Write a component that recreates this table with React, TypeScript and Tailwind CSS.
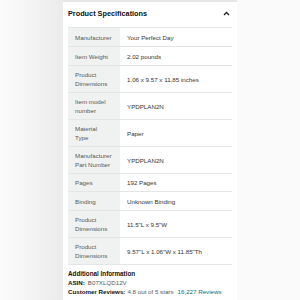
import { ReactNode } from "react";

const specs: { label: ReactNode; value: string; h: string }[] = [
  { label: "Manufacturer", value: "Your Perfect Day", h: "h-[19px]" },
  { label: "Item Weight", value: "2.02 pounds", h: "h-[19px]" },
  { label: <>Product<br />Dimensions</>, value: "1.06 x 9.57 x 11.85 inches", h: "h-[27px]" },
  { label: <>Item model<br />number</>, value: "YPDPLAN2N", h: "h-[27px]" },
  { label: <>Material<br />Type</>, value: "Paper", h: "h-[27px]" },
  { label: <>Manufacturer<br />Part Number</>, value: "YPDPLAN2N", h: "h-[27px]" },
  { label: "Pages", value: "192 Pages", h: "h-[18px]" },
  { label: "Binding", value: "Unknown Binding", h: "h-[19px]" },
  { label: <>Product<br />Dimensions</>, value: "11.5\"L x 9.5\"W", h: "h-[27px]" },
  { label: <>Product<br />Dimensions</>, value: "9.57\"L x 1.06\"W x 11.85\"Th", h: "h-[27px]" },
];

export default function App() {
  return (
    <div className="flex h-[300px] w-[300px] overflow-hidden font-['Liberation_Sans',Arial,sans-serif]">
      {/* left gutter */}
      <div className="w-[63px] shrink-0 bg-gradient-to-r from-[#fcfcfc] to-[#ebebeb]"></div>

      {/* card */}
      <div className="w-[174px] shrink-0 bg-white border-t-2 border-[#e6e6e6] px-[5px]">
        <div className="flex h-[25px] items-center justify-between">
          <span className="text-[7.3px] font-bold text-[#0f1111]">Product Specifications</span>
          <svg width="7" height="5" viewBox="0 0 7 5" className="mr-[2px] mb-[3px]">
            <polyline points="1,4 3.5,1.5 6,4" fill="none" stroke="#222" strokeWidth="1.3" />
          </svg>
        </div>

        <div className="border-b border-[#e3e6e6] text-[6.2px] leading-[9px]">
          {specs.map((s, i) => (
            <div key={i} className={`flex border-t border-[#e3e6e6] ${s.h}`}>
              <div className="flex w-[52px] shrink-0 items-center bg-[#f0f2f2] pl-[7px] whitespace-nowrap text-[#565959]">
                <span>{s.label}</span>
              </div>
              <div className="flex flex-1 items-center pl-[7px] whitespace-nowrap text-[#333]">
                {s.value}
              </div>
            </div>
          ))}
        </div>

        <div className="pt-[4px] text-[6.2px] leading-[9px] text-[#0f1111] whitespace-nowrap">
          <div className="text-[6.3px] font-bold">Additional Information</div>
          <div>
            <span className="font-bold">ASIN:</span>
            <span className="ml-[3px] text-[#565959]">B07XLQD12V</span>
          </div>
          <div>
            <span className="font-bold">Customer Reviews:</span>
            <span className="ml-[2px] text-[#565959]">4.8 out of 5 stars</span>
            <span className="ml-[4px] text-[#007185]">16,227 Reviews</span>
          </div>
        </div>
      </div>

      {/* right gutter */}
      <div className="flex-1 bg-[#fafafa]"></div>
    </div>
  );
}
